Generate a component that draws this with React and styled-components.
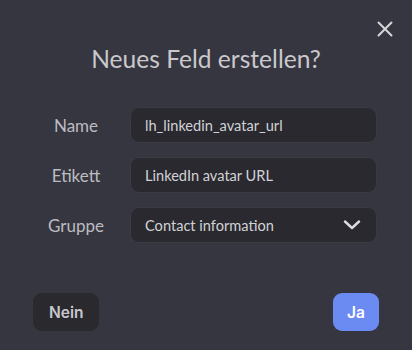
import styled, { createGlobalStyle } from 'styled-components';

const GlobalStyle = createGlobalStyle`
    html, body {
        margin: 0;
        padding: 0;
        background: #363640;
    }
    * {
        box-sizing: border-box;
    }
`;

const StyledDialog = styled.div`
    width: 412px;
    height: 350px;
    background-color: #363640;
    display: flex;
    flex-direction: column;
    padding: 14px 12px 0 0;
    font-family: 'Lato', 'Liberation Sans', sans-serif;
`;

const CloseRow = styled.div`
    display: flex;
    justify-content: flex-end;
    height: 30px;
`;

const CloseButton = styled.button`
    width: 30px;
    height: 30px;
    padding: 0;
    border: none;
    background: transparent;
    display: flex;
    align-items: center;
    justify-content: center;
    cursor: pointer;
`;

const Title = styled.h2`
    margin: 0 0 33px 12px;
    font-size: 24.6px;
    line-height: 30px;
    font-weight: 400;
    color: #c9c9cc;
    text-align: center;
`;

const Form = styled.div`
    display: grid;
    grid-template-columns: 92px 247px;
    column-gap: 8px;
    row-gap: 14px;
    padding-left: 30px;
`;

const Label = styled.label`
    display: flex;
    align-items: center;
    justify-content: center;
    font-size: 17px;
    color: #bcbcc0;
`;

const Field = styled.div`
    height: 36px;
    border-radius: 9px;
    background-color: #29292f;
    border: 1px solid #3b3b44;
    display: flex;
    align-items: center;
    justify-content: space-between;
    padding: 0 15px 0 14px;
    font-size: 14.6px;
    color: #d2d2d6;
`;

const Footer = styled.div`
    display: flex;
    justify-content: space-between;
    padding: 0 21px 0 33px;
    margin-top: 50px;
`;

const Button = styled.button`
    height: 38px;
    padding: 0 ${(p) => (p.$primary ? '14px' : '16px')};
    border: none;
    border-radius: 9px;
    background-color: ${(p) => (p.$primary ? '#6b8bf2' : '#29292e')};
    color: ${(p) => (p.$primary ? '#ffffff' : '#c8c8cc')};
    font-family: 'Inter', 'Liberation Sans', sans-serif;
    font-size: 15.5px;
    font-weight: 600;
    cursor: pointer;
`;

const App = () => {
    return (
        <>
            <GlobalStyle />
            <StyledDialog>
                <CloseRow>
                    <CloseButton aria-label='Schließen'>
                        <svg width='16' height='16' viewBox='0 0 16 16'>
                            <path d='M1.5 1.5 L14.5 14.5 M14.5 1.5 L1.5 14.5' stroke='#d6d6da' strokeWidth='2' strokeLinecap='round' />
                        </svg>
                    </CloseButton>
                </CloseRow>
                <Title>Neues Feld erstellen?</Title>
                <Form>
                    <Label>Name</Label>
                    <Field>lh_linkedin_avatar_url</Field>
                    <Label>Etikett</Label>
                    <Field>LinkedIn avatar URL</Field>
                    <Label>Gruppe</Label>
                    <Field>
                        Contact information
                        <svg width='18' height='10' viewBox='0 0 18 10'>
                            <path d='M2 1.5 L9 8 L16 1.5' fill='none' stroke='#dcdce0' strokeWidth='2.4' strokeLinecap='round' strokeLinejoin='round' />
                        </svg>
                    </Field>
                </Form>
                <Footer>
                    <Button>Nein</Button>
                    <Button $primary>Ja</Button>
                </Footer>
            </StyledDialog>
        </>
    );
}

export default App;
